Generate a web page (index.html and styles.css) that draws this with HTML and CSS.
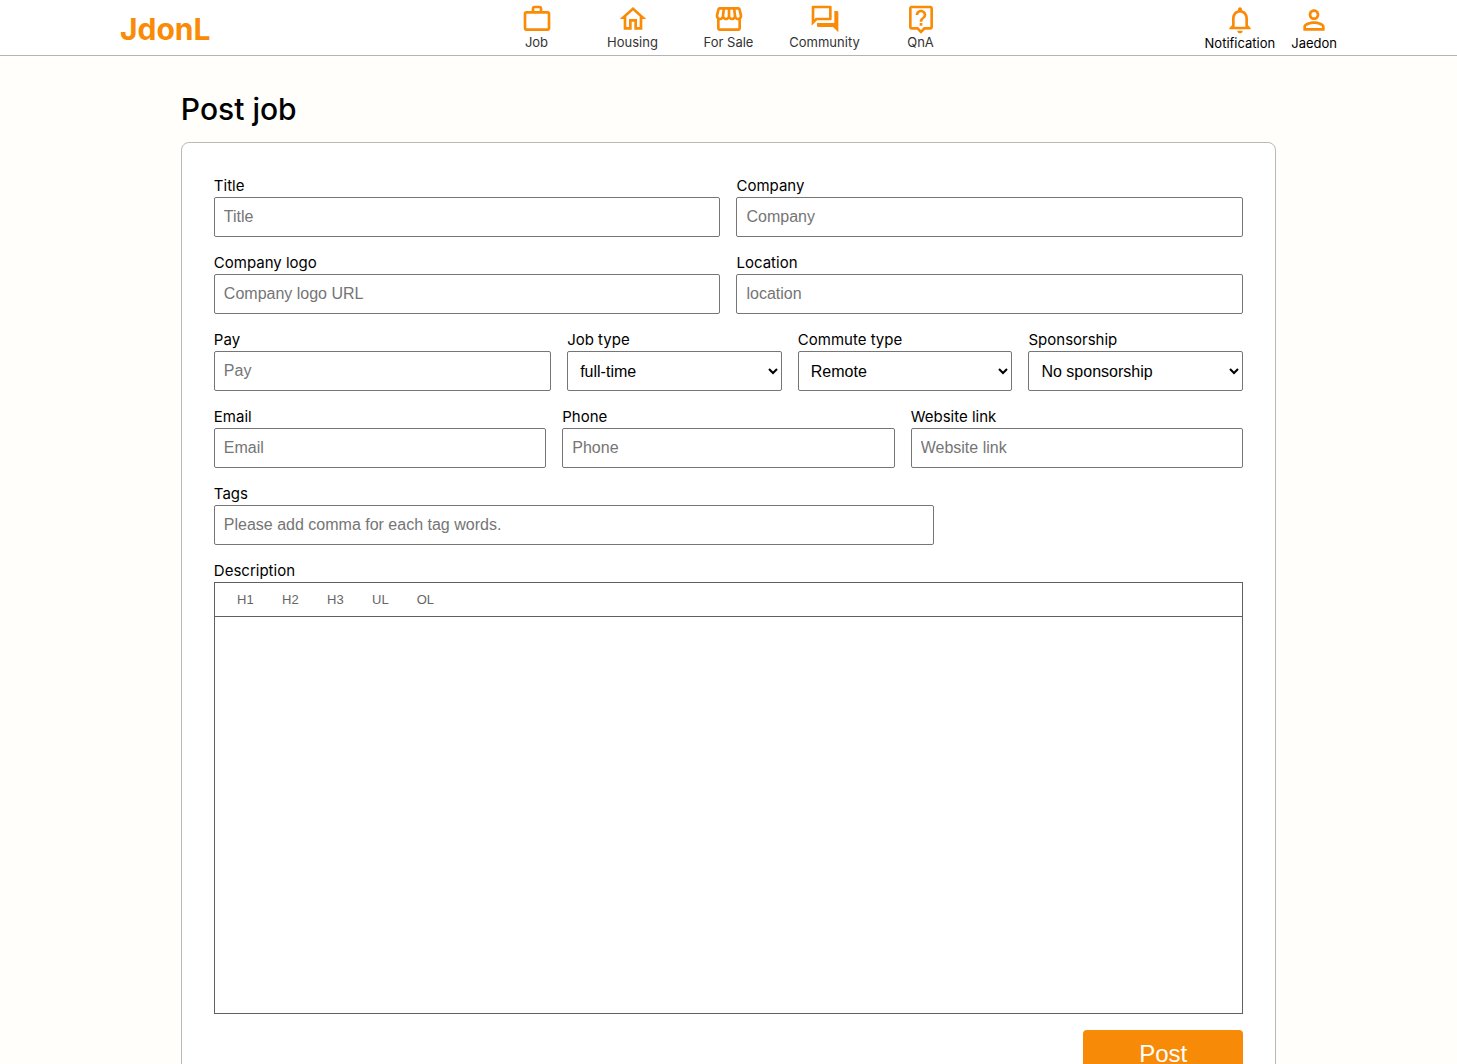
FILE: index.html
```html
<!DOCTYPE html>
<html lang="en">
<head>
  <meta charset="utf-8">
  <meta name="viewport" content="width=device-width, initial-scale=1">
  <title>Post job - JdonL</title>
  <link rel="stylesheet" href="styles.css">
</head>
<body>
  <header class="header">
    <a class="logo" href="#">JdonL</a>
    <nav class="nav">
      <a class="nav-item" href="#">
        <svg class="icon" viewBox="0 0 24 24"><path d="M14 6V4h-4v2h4zM4 8v11h16V8H4zm16-2c1.110 0 2 .89 2 2v11c0 1.110-.89 2-2 2H4c-1.110 0-2-.89-2-2V8c0-1.110.89-2 2-2h4V4c0-1.110.89-2 2-2h4c1.110 0 2 .89 2 2v2h4z"/></svg>
        Job
      </a>
      <a class="nav-item" href="#">
        <svg class="icon" viewBox="0 0 24 24"><path d="M12 5.690l5 4.500V18h-2v-6H9v6H7v-7.810l5-4.500M12 3L2 12h3v8h6v-6h2v6h6v-8h3L12 3z"/></svg>
        Housing
      </a>
      <a class="nav-item" href="#">
        <svg class="icon" viewBox="0 0 24 24"><path d="M21.900 8.890l-1.050-4.370c-.22-.9-1-1.520-1.910-1.520H5.050c-.9 0-1.690.63-1.900 1.520L2.100 8.890c-.24 1.020-.02 2.060.62 2.880.08.11.19.19.28.29V19c0 1.100.9 2 2 2h14c1.100 0 2-.9 2-2v-6.940c.09-.09.2-.18.28-.28.64-.82.87-1.870.62-2.890zm-2.990-3.900l1.050 4.370c.1.42.01.84-.25 1.170-.14.18-.44.47-.94.47-.61 0-1.140-.49-1.210-1.140L16.980 5l1.930-.01zM13 5h1.960l.54 4.520c.05.39-.07.78-.33 1.070-.22.26-.54.41-.95.41-.67 0-1.220-.59-1.220-1.310V5zM8.490 9.520L9.040 5H11v4.690c0 .72-.55 1.310-1.290 1.310-.34 0-.65-.15-.89-.41-.25-.29-.37-.68-.33-1.070zm-4.450-.16L5.050 5h1.970l-.58 4.860c-.08.65-.6 1.140-1.210 1.140-.49 0-.8-.29-.93-.47-.27-.32-.36-.75-.26-1.170zM5 19v-6.030c.08.010.15.030.23.030.87 0 1.660-.36 2.240-.95.6.6 1.400.95 2.310.95.87 0 1.650-.36 2.230-.93.590.57 1.390.93 2.290.93.840 0 1.640-.35 2.240-.95.580.590 1.370.95 2.240.95.080 0 .150-.020.230-.030V19H5z"/></svg>
        For Sale
      </a>
      <a class="nav-item" href="#">
        <svg class="icon" viewBox="0 0 24 24"><path d="M15 4v7H5.170L4 12.170V4h11m1-2H3c-.55 0-1 .45-1 1v14l4-4h10c.55 0 1-.45 1-1V3c0-.55-.45-1-1-1zm5 4h-2v9H6v2c0 .55.45 1 1 1h11l4 4V7c0-.55-.45-1-1-1z"/></svg>
        Community
      </a>
      <a class="nav-item" href="#">
        <svg class="icon" viewBox="0 0 24 24"><path d="M19 2H5c-1.110 0-2 .9-2 2v14c0 1.100.89 2 2 2h4l3 3 3-3h4c1.100 0 2-.9 2-2V4c0-1.100-.9-2-2-2zm0 16h-4.830l-.59.59L12 20.170l-1.590-1.590-.58-.58H5V4h14v14zm-8-3h2v2h-2zm1-8c1.100 0 2 .9 2 2 0 2-3 1.750-3 5h2c0-2.250 3-2.500 3-5 0-2.210-1.790-4-4-4s-4 1.790-4 4h2c0-1.100.9-2 2-2z"/></svg>
        QnA
      </a>
    </nav>
    <div class="account">
      <a class="account-item" href="#">
        <svg class="icon" viewBox="0 0 24 24"><path d="M12 22c1.100 0 2-.9 2-2h-4c0 1.100.9 2 2 2zm6-6v-5c0-3.070-1.630-5.640-4.500-6.320V4c0-.83-.67-1.500-1.500-1.500s-1.500.67-1.500 1.500v.68C7.640 5.360 6 7.920 6 11v5l-2 2v1h16v-1l-2-2zm-2 1H8v-6c0-2.480 1.510-4.500 4-4.500s4 2.020 4 4.500v6z"/></svg>
        Notification
      </a>
      <a class="account-item" href="#">
        <svg class="icon" viewBox="0 0 24 24"><path d="M12 6c1.100 0 2 .9 2 2s-.9 2-2 2-2-.9-2-2 .9-2 2-2m0 9c2.700 0 5.800 1.290 6 2v1H6v-.99c.2-.72 3.300-2.010 6-2.010m0-11C9.790 4 8 5.790 8 8s1.790 4 4 4 4-1.790 4-4-1.790-4-4-4zm0 9c-2.670 0-8 1.340-8 4v3h16v-3c0-2.660-5.330-4-8-4z"/></svg>
        Jaedon
      </a>
    </div>
  </header>

  <main class="page">
    <div class="content">
      <h1 class="page-title">Post job</h1>
      <form class="card">
        <div class="row row-halves">
          <div class="field">
            <label for="title">Title</label>
            <input class="control" id="title" type="text" placeholder="Title">
          </div>
          <div class="field">
            <label for="company">Company</label>
            <input class="control" id="company" type="text" placeholder="Company">
          </div>
        </div>
        <div class="row row-halves">
          <div class="field">
            <label for="logo">Company logo</label>
            <input class="control" id="logo" type="text" placeholder="Company logo URL">
          </div>
          <div class="field">
            <label for="location">Location</label>
            <input class="control" id="location" type="text" placeholder="location">
          </div>
        </div>
        <div class="row row-terms">
          <div class="field">
            <label for="pay">Pay</label>
            <input class="control" id="pay" type="text" placeholder="Pay">
          </div>
          <div class="field">
            <label for="job-type">Job type</label>
            <select class="control" id="job-type"><option>full-time</option><option>part-time</option></select>
          </div>
          <div class="field">
            <label for="commute-type">Commute type</label>
            <select class="control" id="commute-type"><option>Remote</option><option>On-site</option></select>
          </div>
          <div class="field">
            <label for="sponsorship">Sponsorship</label>
            <select class="control" id="sponsorship"><option>No sponsorship</option><option>Sponsorship</option></select>
          </div>
        </div>
        <div class="row row-thirds">
          <div class="field">
            <label for="email">Email</label>
            <input class="control" id="email" type="email" placeholder="Email">
          </div>
          <div class="field">
            <label for="phone">Phone</label>
            <input class="control" id="phone" type="tel" placeholder="Phone">
          </div>
          <div class="field">
            <label for="website">Website link</label>
            <input class="control" id="website" type="url" placeholder="Website link">
          </div>
        </div>
        <div class="field field-tags">
          <label for="tags">Tags</label>
          <input class="control" id="tags" type="text" placeholder="Please add comma for each tag words.">
        </div>
        <div class="field">
          <label for="description">Description</label>
          <div class="editor">
            <div class="toolbar">
              <button class="tool" type="button">H1</button>
              <button class="tool" type="button">H2</button>
              <button class="tool" type="button">H3</button>
              <button class="tool" type="button">UL</button>
              <button class="tool" type="button">OL</button>
            </div>
            <textarea class="editor-text" id="description"></textarea>
          </div>
        </div>
        <button class="submit" type="submit">Post</button>
      </form>
    </div>
  </main>
</body>
</html>
```
FILE: styles.css
```css
* {
  box-sizing: border-box;
}

body {
  margin: 0;
  background: #fffefa;
  color: #000;
  font-family: Inter, "Liberation Sans", sans-serif;
  font-size: 15px;
}

.header {
  display: grid;
  grid-template-columns: 1fr auto 1fr;
  align-items: center;
  height: 56px;
  padding: 0 120px;
  border-bottom: 1px solid #b4b4b4;
  background: #fff;
}

.header a {
  text-decoration: none;
}

.logo {
  padding-top: 2px;
  color: #f98b07;
  font-size: 30px;
  font-weight: 700;
}

.nav {
  display: flex;
}

.nav-item,
.account-item {
  display: flex;
  flex-direction: column;
  align-items: center;
  font-size: 13px;
  line-height: 14px;
}

.nav-item {
  width: 96px;
  padding-bottom: 4px;
  color: #333;
}

.account {
  display: flex;
  justify-content: flex-end;
  gap: 16px;
}

.account-item {
  padding-bottom: 2px;
  color: #000;
}

.icon {
  width: 32px;
  height: 32px;
  fill: #f98b07;
}

.page {
  padding: 32px 120px;
}

.content {
  width: 90%;
  margin: 0 auto;
}

.page-title {
  margin: 0 0 12px;
  font-size: 30px;
  font-weight: 500;
  line-height: 42px;
}

.card {
  display: flex;
  flex-direction: column;
  gap: 16px;
  padding: 33px 32px 32px;
  border: 1px solid #b8bab5;
  border-radius: 8px;
  background: #fff;
}

.row {
  display: grid;
  gap: 16px;
}

.row-halves {
  grid-template-columns: repeat(2, 1fr);
}

.row-terms {
  grid-template-columns: 11fr 7fr 7fr 7fr;
}

.row-thirds {
  grid-template-columns: repeat(3, 1fr);
}

.field {
  display: flex;
  flex-direction: column;
  gap: 2px;
  min-width: 0;
  line-height: 19px;
}

.field-tags {
  width: 70%;
}

.control {
  width: 100%;
  height: 40px;
  padding: 0 9px;
  border: 1px solid #767676;
  border-radius: 2px;
  background: #fff;
  color: #000;
  font-family: "Liberation Sans", Arial, sans-serif;
  font-size: 16px;
}

select.control {
  padding: 0 8px;
}

.control::placeholder {
  color: #757575;
}

.editor {
  display: flex;
  flex-direction: column;
  border: 1px solid #5f6061;
}

.toolbar {
  display: flex;
  padding: 0 8px;
  border-bottom: 1px solid #5f6061;
}

.tool {
  width: 45px;
  height: 33px;
  padding: 0;
  border: 0;
  background: none;
  color: #666;
  font-family: "Liberation Sans", Arial, sans-serif;
  font-size: 13px;
}

.editor-text {
  height: 396px;
  padding: 8px;
  border: 0;
  resize: none;
  font-family: "Liberation Sans", Arial, sans-serif;
  font-size: 16px;
}

.submit {
  align-self: flex-end;
  width: 160px;
  height: 48px;
  border: 0;
  border-radius: 4px;
  background: #f78b07;
  color: #fff;
  font-family: "Liberation Sans", Arial, sans-serif;
  font-size: 24px;
}
```
